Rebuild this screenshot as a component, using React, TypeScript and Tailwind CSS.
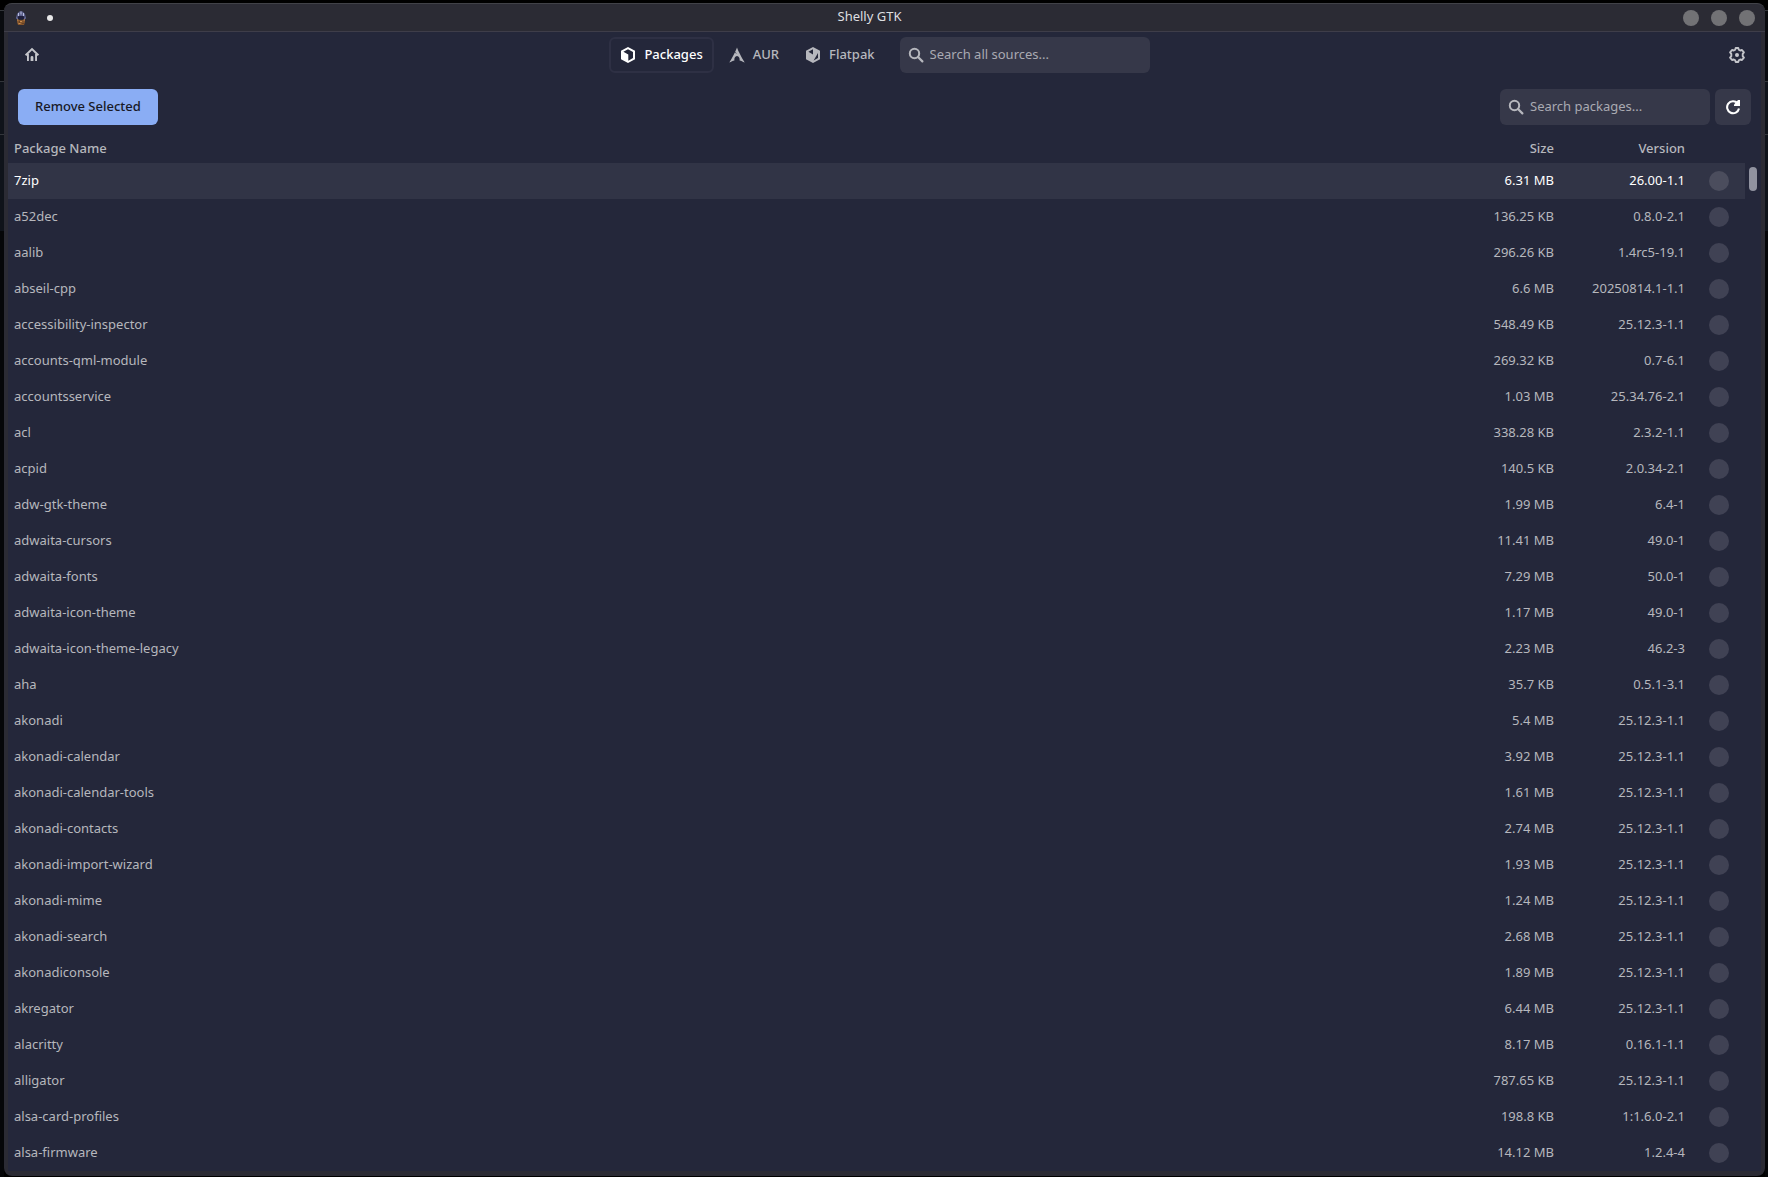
import { useState, type ReactNode } from "react";

type Pkg = [name: string, size: string, version: string];

const packages: Pkg[] = [
  ["7zip", "6.31 MB", "26.00-1.1"],
  ["a52dec", "136.25 KB", "0.8.0-2.1"],
  ["aalib", "296.26 KB", "1.4rc5-19.1"],
  ["abseil-cpp", "6.6 MB", "20250814.1-1.1"],
  ["accessibility-inspector", "548.49 KB", "25.12.3-1.1"],
  ["accounts-qml-module", "269.32 KB", "0.7-6.1"],
  ["accountsservice", "1.03 MB", "25.34.76-2.1"],
  ["acl", "338.28 KB", "2.3.2-1.1"],
  ["acpid", "140.5 KB", "2.0.34-2.1"],
  ["adw-gtk-theme", "1.99 MB", "6.4-1"],
  ["adwaita-cursors", "11.41 MB", "49.0-1"],
  ["adwaita-fonts", "7.29 MB", "50.0-1"],
  ["adwaita-icon-theme", "1.17 MB", "49.0-1"],
  ["adwaita-icon-theme-legacy", "2.23 MB", "46.2-3"],
  ["aha", "35.7 KB", "0.5.1-3.1"],
  ["akonadi", "5.4 MB", "25.12.3-1.1"],
  ["akonadi-calendar", "3.92 MB", "25.12.3-1.1"],
  ["akonadi-calendar-tools", "1.61 MB", "25.12.3-1.1"],
  ["akonadi-contacts", "2.74 MB", "25.12.3-1.1"],
  ["akonadi-import-wizard", "1.93 MB", "25.12.3-1.1"],
  ["akonadi-mime", "1.24 MB", "25.12.3-1.1"],
  ["akonadi-search", "2.68 MB", "25.12.3-1.1"],
  ["akonadiconsole", "1.89 MB", "25.12.3-1.1"],
  ["akregator", "6.44 MB", "25.12.3-1.1"],
  ["alacritty", "8.17 MB", "0.16.1-1.1"],
  ["alligator", "787.65 KB", "25.12.3-1.1"],
  ["alsa-card-profiles", "198.8 KB", "1:1.6.0-2.1"],
  ["alsa-firmware", "14.12 MB", "1.2.4-4"],
];

function Icon({ children }: { children: ReactNode }) {
  return (
    <svg viewBox="0 0 16 16" className="size-4 shrink-0" fill="currentColor" aria-hidden="true">
      {children}
    </svg>
  );
}

const HomeIcon = () => (
  <Icon>
    <path d="M1.600 8.300 8 2l6.400 6.300" fill="none" stroke="currentColor" strokeWidth="1.900" />
    <path d="M3 7h1.900v7H3ZM11.100 7H13v7h-1.900ZM6.600 10.200Q6.600 9 8 9t1.400 1.200V14H6.600Z" />
  </Icon>
);

const PackageIcon = () => (
  <Icon>
    <path d="M8 0 15 3.800v8.400L8 16 1 12.200V3.800Z M3.400 4.800 8.300 7.500v6.200L13 11.100V4.900L8 2.200Z" fillRule="evenodd" />
  </Icon>
);

const ArchIcon = () => (
  <Icon>
    <path d="M8 .4C7.300 2.200 6.900 3.300 6.100 4.900c.5.500 1.100 1.100 2 1.800-1-.4-1.800-.9-2.300-1.300C4.700 7.700 3 10.900.3 15.600c2-1.200 3.600-1.900 5.100-2.200C5.100 11.200 6 8.900 8 8.900s2.900 2.300 2.600 4.500c1.500.3 3.100 1 5.100 2.200C12 9 9.700 5 8 .4Z" />
  </Icon>
);

const FlatpakIcon = () => (
  <Icon>
    <path d="M8 0 15 3.800v8.400L8 16 1 12.200V3.800Z M8 2.200 3.400 4.800 8 7.400Z M13 6v5L8.600 13.500Z" fillRule="evenodd" />
  </Icon>
);

const SearchIcon = () => (
  <Icon>
    <circle cx="6.500" cy="6.500" r="4.700" fill="none" stroke="currentColor" strokeWidth="2" />
    <path d="m10 10 4.400 4.400" stroke="currentColor" strokeWidth="2.200" strokeLinecap="round" />
  </Icon>
);

const GearIcon = () => (
  <Icon>
    <path
      d="M6.700 1h2.600l.5 1.700 1.400.8 1.800-.5 1.900 2.300-1.200 1.500v2.400l1.200 1.500-1.900 2.300-1.800-.5-1.400.8-.5 1.700H6.700l-.5-1.700-1.400-.8-1.800.5-1.900-2.300 1.200-1.500V6.800L1.100 5.300 3 3l1.800.5 1.400-.8Z"
      fill="none"
      stroke="currentColor"
      strokeWidth="1.900"
      strokeLinejoin="round"
    />
    <circle cx="8" cy="8" r="2" />
  </Icon>
);

const RefreshIcon = () => (
  <Icon>
    <path d="M12.600 4.200A6 6 0 1 0 14 9.500" fill="none" stroke="currentColor" strokeWidth="2.100" />
    <path d="M15 1v6H9V5.500L13 1Z" />
  </Icon>
);

function ShellIcon() {
  return (
    <svg viewBox="0 0 10 14" className="h-3.5 w-2.5" aria-hidden="true">
      <path d="M1 3 3 .8 5 0l2 .8L9 3l.8 3L9 8H1L.2 6Z" fill="#5a5e88" />
      <path d="M2.500 2v3M5 .5v3M7.500 2v3" stroke="#b9bfdf" strokeWidth="1" />
      <path d="M1 6 3 5h4l2 1v2H1Z" fill="#20203c" />
      <path d="M1 6v2h1M9 6v2H8" fill="none" stroke="#7b80b0" strokeWidth="1" />
      <path d="M1 8.500 3 9h4l2-.5V11l-1 3H2l-1-3Z" fill="#84552c" />
      <path d="M1 9h1.500M7.500 9H9M4 10.500h2M2.500 12.500h2" stroke="#c98e50" strokeWidth="1" />
      <path d="M3 11h1M6.500 12.500h1" stroke="#4e301b" strokeWidth="1" />
    </svg>
  );
}

function Tab({ icon, label, active, onClick }: { icon: ReactNode; label: string; active: boolean; onClick: () => void }) {
  return (
    <button
      type="button"
      aria-pressed={active}
      onClick={onClick}
      className={`flex h-9 items-center gap-2 rounded-md border-2 px-[9px] font-medium ${
        active ? "border-[#2e3044] text-white" : "border-transparent text-[#b6b7bd]"
      }`}
    >
      {icon}
      <span className="pb-0.5">{label}</span>
    </button>
  );
}

function SearchBox({ placeholder, className }: { placeholder: string; className: string }) {
  return (
    <label className={`flex h-9 items-center gap-1.5 rounded-md bg-[#363849] px-2 text-[#b6b7bd] ${className}`}>
      <SearchIcon />
      <input
        type="text"
        aria-label={placeholder}
        placeholder={placeholder}
        className="min-w-0 flex-1 bg-transparent pb-0.5 outline-none placeholder:text-[#a9aab2]"
      />
    </label>
  );
}

function BackdropEdge({ className }: { className: string }) {
  return (
    <div className={`flex shrink-0 flex-col ${className}`}>
      <div className="h-[11px] border-b border-[#33363b] bg-black" />
      <div className="h-[71px] border-b border-[#33363b] bg-[#090b0f]" />
      <div className="h-[53px] border-b border-[#33363b] bg-[#0f131a]" />
      <div className="h-24 bg-[#0f131a]" />
      <div className="flex-1 bg-[#050608]" />
    </div>
  );
}

export default function App() {
  const [tab, setTab] = useState("Packages");

  return (
    <div className="flex min-h-screen bg-black font-['Noto_Sans',sans-serif] text-[13px] leading-5">
      <BackdropEdge className="w-1" />
      <div className="mt-[3px] mb-px flex min-w-0 flex-1 flex-col rounded-lg border-t border-[#414248] bg-[#2b2b34]">
        <header className="flex h-7 items-center border-b border-[#3e3d49] pr-2.5 pl-3">
          <div className="flex flex-1 items-center gap-[21px]">
            <ShellIcon />
            <span className="size-1.5 rounded-full bg-[#e8e8e8]" />
          </div>
          <h1 className="mr-8 pb-[3px] text-[#dedfe0]">Shelly GTK</h1>
          <div className="flex flex-1 justify-end gap-3">
            <button type="button" aria-label="Minimize" className="size-4 rounded-full bg-[#727275]" />
            <button type="button" aria-label="Maximize" className="size-4 rounded-full bg-[#727275]" />
            <button type="button" aria-label="Close" className="size-4 rounded-full bg-[#727275]" />
          </div>
        </header>

        <main className="mx-1 mb-[5px] flex flex-1 flex-col bg-[#24273a]">
          <nav className="flex items-center px-1.5 py-[5px]">
            <div className="flex flex-1">
              <button type="button" aria-label="Home" className="flex size-9 items-center justify-center text-[#c4c5ca]">
                <HomeIcon />
              </button>
            </div>
            <div className="mr-2.5 flex gap-1">
              <Tab icon={<PackageIcon />} label="Packages" active={tab === "Packages"} onClick={() => setTab("Packages")} />
              <Tab icon={<ArchIcon />} label="AUR" active={tab === "AUR"} onClick={() => setTab("AUR")} />
              <Tab icon={<FlatpakIcon />} label="Flatpak" active={tab === "Flatpak"} onClick={() => setTab("Flatpak")} />
              <SearchBox placeholder="Search all sources..." className="ml-2.5 w-[250px]" />
            </div>
            <div className="flex flex-1 justify-end">
              <button type="button" aria-label="Settings" className="flex size-9 items-center justify-center text-[#c4c5ca]">
                <GearIcon />
              </button>
            </div>
          </nav>

          <div className="flex items-center justify-between px-2.5 pt-[11px]">
            <button type="button" className="h-9 rounded-md bg-[#8aadf4] px-[17px] pb-0.5 font-medium text-[#181926]">
              Remove Selected
            </button>
            <div className="flex gap-[5px]">
              <SearchBox placeholder="Search packages..." className="w-[210px]" />
              <button type="button" aria-label="Refresh" className="flex size-9 items-center justify-center rounded-md bg-[#363849] text-white">
                <RefreshIcon />
              </button>
            </div>
          </div>

          <div className="flex flex-1">
            <table className="flex-1 table-fixed border-collapse self-start text-[#b6b7bd]">
              <thead>
                <tr className="h-[38px]">
                  <th className="pt-2 pl-1.5 text-left font-medium">Package Name</th>
                  <th className="w-36 pt-2 text-right font-medium">Size</th>
                  <th className="w-[131px] pt-2 text-right font-medium">Version</th>
                  <th className="w-[60px]" aria-label="Selected" />
                </tr>
              </thead>
              <tbody>
                {packages.map(([name, size, version], i) => (
                  <tr key={name} className={`h-9 ${i === 0 ? "bg-[#313446] text-white" : ""}`}>
                    <td className="pb-0.5 pl-1.5">{name}</td>
                    <td className="pb-0.5 text-right">{size}</td>
                    <td className="pb-0.5 text-right">{version}</td>
                    <td className="pl-6">
                      <input
                        type="checkbox"
                        aria-label={`Select ${name}`}
                        className={`block size-5 appearance-none rounded-full checked:bg-[#8aadf4] ${i === 0 ? "bg-[#4b4d5d]" : "bg-[#404254]"}`}
                      />
                    </td>
                  </tr>
                ))}
              </tbody>
            </table>
            <div className="w-4 pt-[42px] pl-1">
              <div className="h-6 w-2 rounded-full bg-[#9193a0]" />
            </div>
          </div>
        </main>
      </div>
      <BackdropEdge className="w-[3px]" />
    </div>
  );
}
